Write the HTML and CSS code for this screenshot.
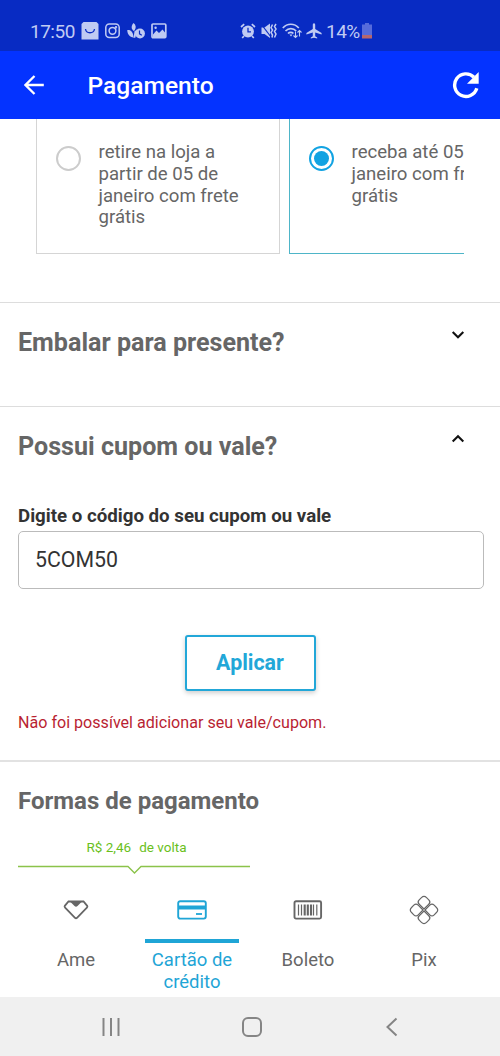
FILE: index.html
```html
<!DOCTYPE html>
<html lang="pt-BR">
<head>
<meta charset="utf-8">
<title>Pagamento</title>
<link rel="stylesheet" href="styles.css">
</head>
<body>
<div class="status">
  <div class="status-left">
    <span class="clock">17:50</span>
    <svg width="18" height="18" viewBox="0 0 18 18"><path d="M2.500 0h13l2 2v15.500h-17V2z" fill="#c0cbf3"/><path d="M4.500 7c.8 5 8.200 5 9 0" fill="none" stroke="#0a2cc4" stroke-width="1.300"/></svg>
    <svg width="15" height="16" viewBox="0 0 15 16" fill="none" stroke="#c0cbf3" stroke-width="1.500"><rect x=".8" y="1" width="13.400" height="13.600" rx="3.500"/><circle cx="7.500" cy="7.800" r="3.400"/><circle cx="11" cy="4.200" r=".5"/></svg>
    <svg width="18" height="16" viewBox="0 0 18 16" fill="#c0cbf3"><path d="M6.500 0C9 2 9.500 4.500 7.500 7.500L6.800 8C4 6 4 3 6.500 0z"/><path d="M.3 7c3.500-.5 6 2 6.200 7.500C2.500 14 .2 11 .3 7z"/><path d="M7.500 8.500L10 6.200 8.500 14.500l-2 .5z"/><circle cx="13" cy="10.500" r="4.900"/><path d="M12.500 7.500v3.300l2.300 1.400" fill="none" stroke="#0a2cc4" stroke-width="1.200"/></svg>
    <svg width="16" height="16" viewBox="0 0 16 16"><rect x="1" y="1" width="13.800" height="13.600" rx="1" fill="none" stroke="#c0cbf3" stroke-width="1.700"/><path d="M2 11.500L5.500 7.500 8 10l3.500-3.500L14 9.500V14H2z" fill="#c0cbf3"/><circle cx="4.600" cy="4.800" r="1.200" fill="#c0cbf3"/></svg>
  </div>
  <div class="status-right">
    <svg width="16" height="16" viewBox="0 0 16 16"><circle cx="8" cy="8.500" r="5.900" fill="#c0cbf3"/><path d="M1 4L4.200 1.200M15 4l-3.200-2.800M4 13l-1.800 2M12 13l1.800 2" stroke="#c0cbf3" stroke-width="1.700" fill="none"/><path d="M8 4.800v4h3" fill="none" stroke="#0a2cc4" stroke-width="1.300"/></svg>
    <svg class="mute" width="17" height="16" viewBox="0 0 17 16"><path d="M.5 4.500h3l5.500-4v14.500l-5.500-4h-3z" fill="#c0cbf3"/><path d="M.5 1.500L10 14" stroke="#0a2cc4" stroke-width="1.200"/><path d="M11.500 1.500L10 4.700 11.500 7 10 9.500l1.500 2.500-.5 2.500M15 1l-1.500 2.500L15 6l-1.500 2.500L15 11l-1.500 3.500" fill="none" stroke="#c0cbf3" stroke-width="1.500"/></svg>
    <svg class="wifi" width="20" height="16" viewBox="0 0 20 16" fill="none" stroke="#c0cbf3" stroke-width="1.700"><path d="M.8 5c4.500-5 11.500-5 16 0M3.500 8c3-3.300 7.800-3.300 10.700 0M6 10.500c1.500-1.500 4-1.500 5.400 0"/><path d="M7.500 11.500h3L9 13.500z" fill="#c0cbf3" stroke="none"/><path d="M13.500 8.500v6M11.500 12.500l2 2 2-2M17.500 13.500v-6M15.500 9.500l2-2 2 2" stroke-width="1.100"/></svg>
    <svg class="plane" width="16" height="16" viewBox="0 0 16 16"><path d="M8 .3c.9 0 1.200.8 1.200 1.700v4L15.600 10v1.500L9.200 9.600v3.700l2 1.300v1L8 14.800l-3.200.8v-1l2-1.300V9.600L.4 11.500V10l6.400-4V2C6.800 1.100 7.100.3 8 .3z" fill="#c0cbf3"/></svg>
    <span class="percent">14%</span>
    <svg class="battery" width="10" height="16" viewBox="0 0 10 16"><path d="M3 0h4v1.500h3V12H0V1.500h3z" fill="#566bdb"/><path d="M0 12h10v3.500H0z" fill="#b6666d"/></svg>
  </div>
</div>
<header class="appbar">
  <svg width="20" height="20" viewBox="0 0 20 20" fill="none" stroke="#fff" stroke-width="2.300"><path d="M19.800 10H1.800M10.500 1L1.500 10l9 9"/></svg>
  <h1 class="title">Pagamento</h1>
  <svg class="reload" width="28" height="28" viewBox="0 0 28 28"><path d="M24.800 17.300A11.300 11.300 0 1 1 22 6.200" fill="none" stroke="#fff" stroke-width="3.400"/><path d="M26.700 1v11.800H15z" fill="#fff"/></svg>
</header>
<main class="content">
  <div class="options">
    <div class="option">
      <span class="radio"></span>
      <p class="option-text">retire na loja a<br>partir de 05 de<br>janeiro com frete<br>grátis</p>
    </div>
    <div class="option option-on">
      <span class="radio radio-on"></span>
      <p class="option-text">receba até 05<br>janeiro com frete<br>grátis</p>
    </div>
  </div>
  <section class="panel gift">
    <h2 class="heading">Embalar para presente?</h2>
    <svg class="chevron" width="14" height="10" viewBox="0 0 14 10"><path d="M1.700 2L7 7.200 12.300 2" fill="none" stroke="#111" stroke-width="2.100"/></svg>
  </section>
  <section class="panel coupon">
    <div class="coupon-head">
      <h2 class="heading">Possui cupom ou vale?</h2>
      <svg class="chevron" width="14" height="10" viewBox="0 0 14 10"><path d="M1.700 7.500L7 2.300l5.300 5.200" fill="none" stroke="#111" stroke-width="2.100"/></svg>
    </div>
    <label class="label" for="code">Digite o código do seu cupom ou vale</label>
    <input class="field" id="code" type="text" value="5COM50">
    <button class="apply">Aplicar</button>
    <p class="error">Não foi possível adicionar seu vale/cupom.</p>
  </section>
  <section class="panel payment">
    <h2 class="heading heading-payment">Formas de pagamento</h2>
    <div class="cashback">
      <p class="cashback-text"><span>R$ 2,46</span><span>de volta</span></p>
      <svg width="232" height="10" viewBox="0 0 232 10"><path d="M0 1.500h110l6.500 6.500 6.500-6.500h109" fill="none" stroke="#8bc34a" stroke-width="1.300"/></svg>
    </div>
    <div class="tabs">
      <div class="tab">
        <div class="tab-icon"><svg width="26" height="22" viewBox="0 0 26 22"><path d="M5.500 2.500h15l3.700 4.300q.6 1-.3 1.900L14 18.800q-1 .9-2 0L2.100 8.700Q1.200 7.800 1.800 6.800z" fill="none" stroke="#666" stroke-width="1.800"/><path d="M7 2.500h12L14.500 7q-1.500 1.300-3 0z" fill="#666"/></svg></div>
        <span class="tab-name">Ame</span>
      </div>
      <div class="tab tab-on">
        <div class="tab-icon"><svg width="30" height="20" viewBox="0 0 30 20"><rect x="1.200" y="1.200" width="27.600" height="17.400" rx="2" fill="none" stroke="#1fa5d6" stroke-width="1.900"/><path d="M1 5.500h28v4H1z" fill="#1fa5d6"/><path d="M19 14h6" stroke="#1fa5d6" stroke-width="1.800"/></svg></div>
        <span class="tab-name">Cartão de crédito</span>
      </div>
      <div class="tab">
        <div class="tab-icon"><svg width="30" height="20" viewBox="0 0 30 20"><rect x="1.500" y="1.200" width="26.600" height="17.400" rx="1.500" fill="none" stroke="#666" stroke-width="1.900"/><path d="M5.500 4.500v11M8.500 4.500v11M20.500 4.500v11M23.800 4.500v11" stroke="#666" stroke-width="1.200"/><path d="M11.700 4.500v11M14.800 4.500v11M18 4.500v11" stroke="#666" stroke-width="2.100"/></svg></div>
        <span class="tab-name">Boleto</span>
      </div>
      <div class="tab">
        <div class="tab-icon"><svg width="32" height="32" viewBox="0 0 32 32" fill="none" stroke="#666" stroke-width="1.200"><g transform="rotate(45 16 16)"><path id="petal" d="M15.300 15.300H8.500q-3.100 0-3.100-3.100V9q0-3.600 3.600-3.600h3.200q3.100 0 3.100 3.100z"/><use href="#petal" transform="rotate(90 16 16)"/><use href="#petal" transform="rotate(180 16 16)"/><use href="#petal" transform="rotate(270 16 16)"/></g></svg></div>
        <span class="tab-name">Pix</span>
      </div>
    </div>
  </section>
</main>
<nav class="navbar">
  <svg width="20" height="20" viewBox="0 0 20 20" stroke="#858585" stroke-width="2"><path d="M2.500 1v18M10 1v18M17.500 1v18"/></svg>
  <svg width="20" height="20" viewBox="0 0 20 20" fill="none" stroke="#858585" stroke-width="2"><rect x="1" y="1" width="18" height="18" rx="5"/></svg>
  <svg width="20" height="20" viewBox="0 0 20 20" fill="none" stroke="#858585" stroke-width="2"><path d="M14.500 1.500L5.500 10l9 8.500"/></svg>
</nav>
</body>
</html>
```
FILE: styles.css
```css
* { box-sizing: border-box; }
body {
  margin: 0;
  width: 500px;
  height: 1056px;
  display: flex;
  flex-direction: column;
  overflow: hidden;
  background: #fff;
  font-family: Roboto, "Liberation Sans", sans-serif;
  color: #666;
}
h1, h2, p { margin: 0; }
svg { display: block; flex: none; }

.status {
  height: 51px;
  flex: none;
  display: grid;
  grid-template-columns: 210px 1fr;
  padding: 11px 0 0 30px;
  background: #082bc3;
  color: #c0cbf3;
  font-size: 19px;
  letter-spacing: -.5px;
}
.status-left, .status-right { display: flex; align-items: center; }
.status-left { gap: 6.500px; }
.clock { width: 44px; }
.mute { margin-left: 5px; }
.wifi { margin-left: 4px; }
.plane { margin-left: 4px; }
.percent { margin-left: 4px; width: 35px; }
.battery { margin-left: 1px; }

.appbar {
  height: 68px;
  flex: none;
  display: flex;
  align-items: center;
  padding: 0 20px 0 24px;
  background: #0433ff;
  color: #fff;
}
.title { margin: 1px 0 0 43.500px; font-size: 24.600px; font-weight: 500; }
.reload { margin-left: auto; }

.content { flex: 1; min-height: 0; overflow: hidden; }
.options {
  display: flex;
  gap: 9px;
  height: 183px;
  margin: 0 36px;
  overflow: hidden;
}
.option {
  flex: none;
  display: flex;
  width: 244px;
  height: 135px;
  padding: 23px 0 0 18.500px;
  border: 1px solid #d5d5d5;
  border-top: 0;
}
.option-on { border-color: #4eb5c8; }
.radio {
  width: 25px;
  height: 25px;
  margin: 4px 18px 0 0;
  flex: none;
  border: 2px solid #ccc;
  border-radius: 50%;
}
.radio-on {
  border-color: #12a3e2;
  background: #12a3e2;
  background-clip: content-box;
  padding: 3px;
}
.option-text { font-size: 18.600px; line-height: 21.800px; white-space: nowrap; }

.panel { border-top: 1px solid #ddd; padding: 0 18px; }
.heading { font-size: 25.100px; line-height: 30px; font-weight: 700; color: #666; }
.heading-payment { font-size: 24px; }
.gift {
  height: 104px;
  display: flex;
  justify-content: space-between;
  padding: 25px 35px 0 18px;
}
.chevron { margin-top: 2px; }
.coupon { height: 354px; }
.coupon-head {
  display: flex;
  justify-content: space-between;
  padding: 25px 17px 0 0;
}
.label {
  display: block;
  margin-top: 42px;
  font-size: 18.700px;
  line-height: 24px;
  font-weight: 700;
  color: #333;
}
.field {
  display: block;
  width: 466px;
  height: 58px;
  margin-top: 3px;
  padding: 0 17px 2px 16px;
  border: 1px solid #bbb;
  border-radius: 5px;
  background: #fff;
  font: 21.300px Roboto, "Liberation Sans", sans-serif;
  color: #333;
}
.apply {
  display: block;
  width: 131px;
  height: 56px;
  margin: 46px auto 0;
  border: 2px solid #22a7d8;
  border-radius: 3px;
  background: #fff;
  box-shadow: 0 2px 5px rgba(0, 0, 0, .2);
  padding-bottom: 2px;
  font: 700 21.400px Roboto, "Liberation Sans", sans-serif;
  color: #22a7d8;
}
.error { margin-top: 20px; font-size: 16.100px; line-height: 24px; color: #b91f32; }

.payment { border-top: 2px solid #e2e2e2; padding-top: 24px; }
.cashback { width: 232px; margin-top: 22px; }
.cashback-text {
  display: flex;
  gap: 8px;
  justify-content: center;
  padding-left: 5px;
  margin-bottom: 9px;
  font-size: 13.500px;
  line-height: 18px;
  color: #6abf1c;
}
.tabs { display: grid; grid-template-columns: repeat(4, 116px); }
.tab { display: flex; flex-direction: column; align-items: center; }
.tab-icon {
  width: 94px;
  height: 68px;
  display: flex;
  align-items: center;
  justify-content: center;
  padding-top: 6px;
  border-bottom: 4px solid transparent;
}
.tab-name {
  width: 94px;
  margin-top: 6px;
  text-align: center;
  font-size: 18.500px;
  line-height: 22px;
}
.tab-on { color: #1fa5d6; }
.tab-on .tab-icon { border-color: #1fa5d6; }

.navbar {
  height: 59px;
  flex: none;
  display: flex;
  align-items: center;
  justify-content: space-between;
  padding: 0 98px 0 101px;
  background: #f0f0f0;
}
```
